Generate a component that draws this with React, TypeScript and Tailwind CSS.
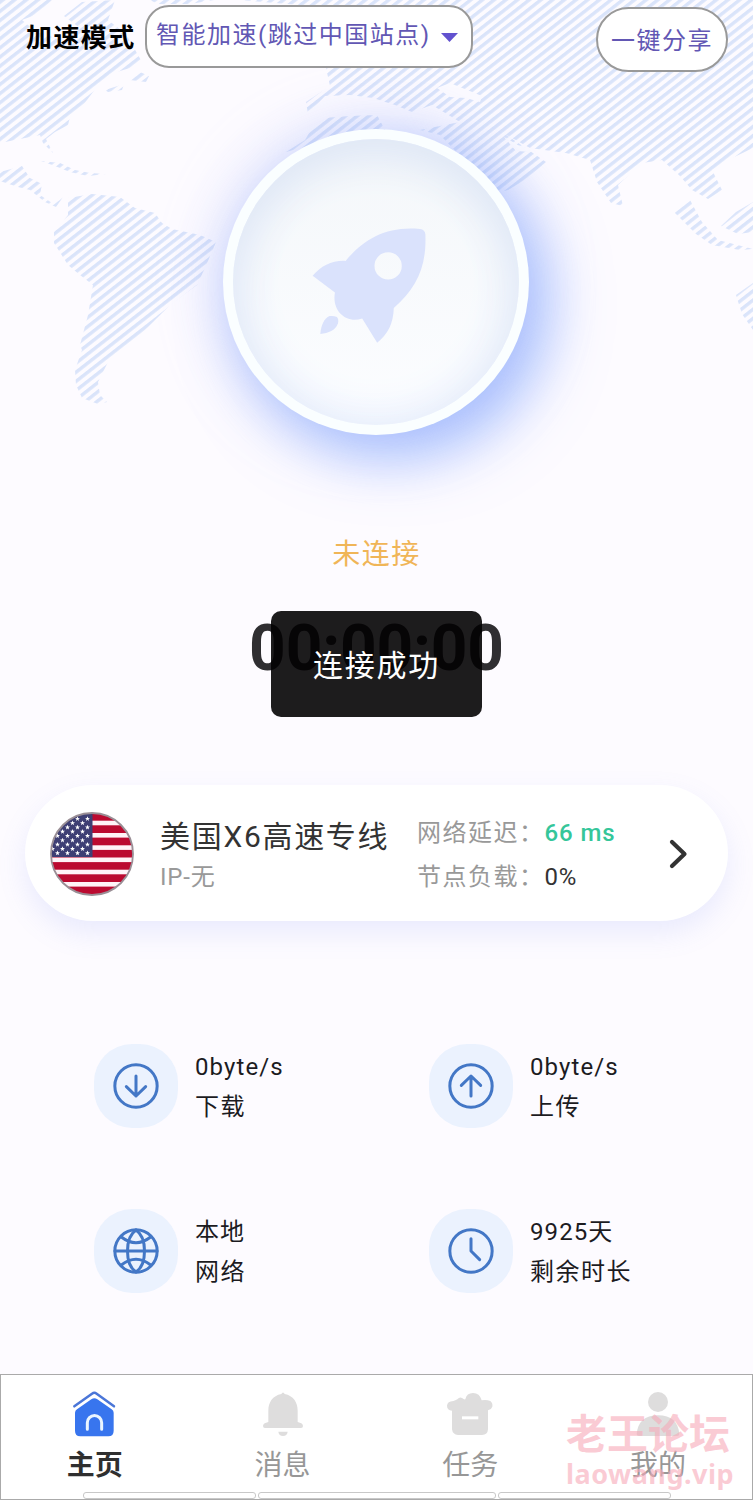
import type { ReactNode } from "react";

const strokeProps = {
  fill: "none",
  stroke: "#4377c6",
  strokeWidth: 9,
  strokeLinecap: "round" as const,
  strokeLinejoin: "round" as const,
};

function WorldMap() {
  return (
    <svg
      className="absolute top-0 left-0 w-[753px] h-[420px]"
      viewBox="0 0 753 420"
    >
      <defs>
        <pattern
          id="hatch"
          width="20"
          height="7.2"
          patternUnits="userSpaceOnUse"
          patternTransform="rotate(-38)"
        >
          <rect width="20" height="3.4" fill="#dae4fa" />
        </pattern>
      </defs>
      <g fill="url(#hatch)">
        {/* North America */}
        <path d="M0 0H52L38 14L22 20L34 30L60 40L80 28L64 16L82 2L115 0L108 20L126 34L142 62L130 68L110 74L96 88L84 104L70 117L68 125L55 132L46 139L53 153L43 143L40 135L15 140L0 143Z" />
        <path d="M130 80L140 72L149 76L146 82ZM105 90L124 84L122 90L108 92Z" />
        <path d="M150 0H214L190 4H158Z" />
        {/* Central America and the Caribbean */}
        <path d="M0 172L22 166L30 178L42 184L40 195L52 203L63 197L56 207L45 202L30 190L18 187L0 181Z" />
        <path d="M41 161L60 163L75 170L90 173L106 174L88 176L70 172L55 166Z" />
        {/* South America */}
        <path d="M68 198L92 194L120 197L135 208L155 213L162 223L172 229L200 235L216 242L205 268L197 285L186 293L170 305L155 320L140 335L120 350L108 362L103 372L98 382L100 395L107 402L98 404L82 398L76 385L75 370L82 350L80 345L88 315L93 285L80 275L68 265L54 243L54 232L68 215Z" />
        {/* Eurasia */}
        <path d="M240 0H753V148L728 160L712 170L722 190L708 199L692 190L680 176L662 160L642 163L618 185L623 206L611 203L597 182L590 160L566 153L530 148L505 134L546 162L528 178L508 190L500 192L480 176L440 135L420 130L445 125L460 122L432 105L412 112L395 105L373 98L350 95L325 96L308 114L306 102L330 86L326 68L300 5Z" />
        <path d="M286 152L305 140L312 128L324 118L350 116L377 115L385 130L330 140Z" />
        {/* Indonesia and Australia */}
        <path d="M673 211L690 200L702 222L718 240L753 249L740 250L712 245L696 234Z" />
        <path d="M721 226L736 212L753 202V232L738 234Z" />
        <path d="M736 295L753 283V330L742 314Z" />
      </g>
      <path d="M437 88L450 83L482 96L480 102L466 98L450 97Z" fill="#fcfbff" />
      <path d="M504 137L518 145L530 149L532 152L516 151Z" fill="#fcfbff" />
    </svg>
  );
}

function Rocket() {
  return (
    <svg className="w-[133px] h-[133px]" viewBox="329 317 400 400" fill="#dae2fc">
      <path
        fillRule="evenodd"
        d="M436 452C490 388 558 346 660 356Q675 358 676 372C680 470 650 532 581 594C580 640 562 675 531 698L486 625C436 642 394 600 404 547L337 497C362 467 396 450 436 452ZM564 426A41 41 0 1 0 564 508A41 41 0 1 0 564 426Z"
      />
      <path d="M360 672C362 645 372 625 388 618Q400 616 410 621Q416 628 413 640C405 662 385 668 360 672Z" />
    </svg>
  );
}

function UsFlag() {
  const stars: { x: number; y: number }[] = [];
  for (let row = 0; row < 9; row++) {
    for (let col = 0; col < 4; col++) {
      stars.push({ x: 37.5 - col * 10 - (row % 2 ? 5 : 0), y: 6.7 + row * 4.3 });
    }
  }
  return (
    <svg className="w-[84px] h-[84px] shrink-0" viewBox="0 0 84 84">
      <defs>
        <clipPath id="flagClip">
          <circle cx="42" cy="42" r="41" />
        </clipPath>
        <path
          id="star"
          d="M0-2.5L.7-.8L2.500-.8L1 .4L1.600 2.200L0 1.100L-1.600 2.200L-1 .4L-2.500-.8L-.7-.8Z"
        />
      </defs>
      <g clipPath="url(#flagClip)">
        <rect width="84" height="84" fill="#bb0a30" />
        {[8.7, 21, 33.3, 45.5, 57.7, 70].map((y) => (
          <rect key={y} y={y} width="84" height="4.6" fill="#fff3f7" />
        ))}
        <rect width="42.5" height="45" fill="#3e3f74" />
        {stars.map((s, i) => (
          <use key={i} href="#star" x={s.x} y={s.y} fill="#fff" />
        ))}
      </g>
      <circle cx="42" cy="42" r="41" fill="none" stroke="#9a8f96" strokeWidth="1.8" />
    </svg>
  );
}

interface StatProps {
  icon: ReactNode;
  value: string;
  label: string;
}

function Stat({ icon, value, label }: StatProps) {
  return (
    <div className="flex items-center gap-[17px] h-[84px]">
      <div className="w-[84px] h-[84px] rounded-[38px] bg-[#ebf2fe] flex items-center justify-center">
        <svg className="w-[48px] h-[48px]" viewBox="0 0 144 144" {...strokeProps}>
          <circle cx="72" cy="72" r="63.5" />
          {icon}
        </svg>
      </div>
      <div className="text-[24px] leading-[40px] text-[#1c1b1f] pt-[2px]">
        <p className="tracking-[1.1px]">{value}</p>
        <p className="tracking-[1.5px]">{label}</p>
      </div>
    </div>
  );
}

interface NavItemProps {
  icon: ReactNode;
  label: string;
  active?: boolean;
}

function NavItem({ icon, label, active }: NavItemProps) {
  return (
    <div className="flex-1 flex flex-col items-center pt-[15px]">
      <svg className="w-[48px] h-[48px]" viewBox="0 0 144 144" fill="#dedddd">
        {icon}
      </svg>
      <span
        className={
          active
            ? "mt-[10px] text-[28px] leading-[36px] font-bold text-[#2f2f2f]"
            : "mt-[10px] text-[28px] leading-[36px] text-[#979797]"
        }
      >
        {label}
      </span>
    </div>
  );
}

export default function App() {
  return (
    <div className="relative w-[753px] h-[1500px] overflow-hidden bg-[#fdfbff] flex flex-col font-[Roboto,'Noto_Sans_CJK_SC',sans-serif]">
      <WorldMap />

      {/* Header */}
      <header className="relative flex items-start h-[72px] pt-[5px] pl-[26px] pr-[25px] shrink-0">
        <span className="w-[119px] pt-[15px] text-[26px] leading-[36px] font-bold tracking-[1.4px] text-black whitespace-nowrap">
          加速模式
        </span>
        <div className="w-[328px] h-[63px] rounded-[24px] border-2 border-[#999] bg-white flex items-center pl-[9px] pb-[3px]">
          <span className="text-[24px] tracking-[1.5px] text-[#6257b4] whitespace-nowrap">
            智能加速(跳过中国站点)
          </span>
          <svg className="w-[17px] h-[9px] ml-[10px] mt-[4px]" viewBox="0 0 17 9">
            <path d="M0 0H17L8.5 9Z" fill="#6252cf" />
          </svg>
        </div>
        <button className="ml-auto mt-[2px] pt-[2px] w-[132px] h-[65px] rounded-full border-2 border-[#999] bg-white text-[24px] tracking-[1.5px] text-[#6257b4] whitespace-nowrap">
          一键分享
        </button>
      </header>

      {/* Connect button */}
      <div className="relative mt-[57px] ml-[223px] w-[306px] h-[306px] shrink-0 rounded-full bg-[#fafeff] p-[10px] shadow-[0_0_64px_rgba(160,175,245,0.42),18px_22px_60px_rgba(90,140,255,0.52)]">
        <div className="w-full h-full rounded-full bg-linear-to-b from-[#f4f7fa] to-[#fcfdff] flex items-center justify-center shadow-[inset_0_14px_44px_#dfe7f4,inset_0_0_50px_#e6eeff]">
          <Rocket />
        </div>
      </div>

      <p className="relative mt-[100px] text-center text-[28px] leading-[40px] tracking-[1.5px] text-[#f0b557]">
        未连接
      </p>

      {/* Timer, with the toast over it */}
      <div className="relative self-center mt-[36px] w-[211px] h-[106px]">
        <div className="flex justify-center pt-px">
          <span className="text-[64px] leading-[74px] font-bold tracking-[-0.2px] text-[#2f2e31] whitespace-nowrap">
            00:00:00
          </span>
        </div>
        <div className="absolute inset-0 rounded-[10px] bg-[#010001]/89 flex items-center justify-center pt-[2px] text-[30px] tracking-[1.7px] text-white">
          连接成功
        </div>
      </div>

      {/* Server card */}
      <div className="relative mt-[68px] mx-[25px] h-[136px] shrink-0 rounded-[68px] bg-white pl-[25px] pt-px flex items-center shadow-[0_12px_28px_rgba(120,140,240,0.15)]">
        <UsFlag />
        <div className="w-[283px] shrink-0 pt-[4px] pl-[26px] whitespace-nowrap">
          <p className="text-[30px] leading-[42px] tracking-[1.7px] text-[#333]">美国X6高速专线</p>
          <p className="text-[24px] leading-[38px] tracking-[0.8px] text-[#999]">IP-无</p>
        </div>
        <div className="text-[24px] leading-[44px] tracking-[1.5px] text-[#999] pt-[3px] whitespace-nowrap">
          <p>
            网络延迟：<span className="font-medium text-[#35c69a] tracking-[0.9px]">66 ms</span>
          </p>
          <p>
            节点负载：<span className="text-[#333] tracking-[0.8px]">0%</span>
          </p>
        </div>
        <svg className="w-[20px] h-[32px] ml-auto mr-[40px]" viewBox="0 0 20 32">
          <path
            d="M4 4L16.500 16L4 28"
            fill="none"
            stroke="#333"
            strokeWidth="4.2"
            strokeLinecap="round"
            strokeLinejoin="round"
          />
        </svg>
      </div>

      {/* Traffic stats */}
      <div className="grid grid-cols-2 gap-y-[81px] mt-[123px] ml-[94px] w-[670px]">
        <Stat
          icon={<path d="M72 42V102M43 74L72 102L101 74" />}
          value="0byte/s"
          label="下载"
        />
        <Stat
          icon={<path d="M72 102V42M43 70L72 42L101 70" />}
          value="0byte/s"
          label="上传"
        />
        <Stat
          icon={
            <path d="M9 72H135M72 9C38 32 38 112 72 135M72 9C106 32 106 112 72 135M28 30Q72 64 116 30M28 114Q72 80 116 114" />
          }
          value="本地"
          label="网络"
        />
        <Stat
          icon={<path d="M72 35V72L98 98" />}
          value="9925天"
          label="剩余时长"
        />
      </div>

      {/* Bottom navigation */}
      <nav className="relative mt-auto h-[126px] shrink-0 border border-[#aaa] bg-white flex">
        <NavItem
          active
          label="主页"
          icon={
            <>
              <path
                d="M10 49L63 11Q70 6 77 11L129 49"
                fill="none"
                stroke="#4b76d8"
                strokeWidth="7.5"
                strokeLinecap="round"
              />
              <path
                d="M61 28Q70 21 79 28L122 58Q128 62 128 68V122Q128 139 112 139H28Q12 139 12 122V68Q12 62 18 58Z"
                fill="#3875ee"
              />
              <path
                d="M49 118V98A21.500 21.500 0 0 1 92 98V118"
                fill="none"
                stroke="#eaf5ff"
                strokeWidth="9"
                strokeLinecap="round"
              />
            </>
          }
        />
        <NavItem
          label="消息"
          icon={
            <>
              <path d="M67 12Q72 3 77 12C103 17 116 37 116 62V96L127 100Q132 103 132 108Q132 114 126 114H18Q12 114 12 108Q12 103 17 100L28 96V62C28 37 41 17 67 12Z" />
              <path d="M58 125H86Q84 138 72 138Q60 138 58 125Z" />
            </>
          }
        />
        <NavItem
          label="任务"
          icon={
            <>
              <path d="M18 62Q3 60 3 47Q4 34 22 33Q28 32 34 28Q41 20 48 24Q54 29 58 28Q62 9 81 9Q101 9 107 31Q121 28 133 33Q141 40 139 50Q136 59 126 61V118Q125 135 108 135H36Q20 134 18 118Z" />
              <rect x="48" y="79" width="49" height="9" fill="#fff" />
            </>
          }
        />
        <NavItem
          label="我的"
          icon={
            <>
              <circle cx="72" cy="36" r="30" />
              <path d="M8 132C11 96 32 76 72 76C112 76 133 96 136 132Q136 138 129 138H15Q8 138 8 132Z" />
            </>
          }
        />
        {/* Gesture bar outline */}
        <div className="absolute left-[82px] bottom-0 w-[588px] h-[7px] flex gap-[2px]">
          <div className="w-[173px] border border-[#c8c8c8] rounded-[3px]" />
          <div className="flex-1 border border-[#c8c8c8] rounded-[3px]" />
          <div className="w-[173px] border border-[#c8c8c8] rounded-[3px]" />
        </div>
      </nav>

      {/* Watermark */}
      <div className="absolute left-[566px] top-[1408px] font-bold text-[#f7a9b8]/60 whitespace-nowrap pointer-events-none">
        <p className="text-[41px] leading-[46px] font-['Noto_Sans_CJK_SC',sans-serif]">老王论坛</p>
        <p className="mt-[2px] text-[27px] leading-[36px] tracking-[0.5px] font-['Noto_Sans',sans-serif]">laowang.vip</p>
      </div>
    </div>
  );
}
